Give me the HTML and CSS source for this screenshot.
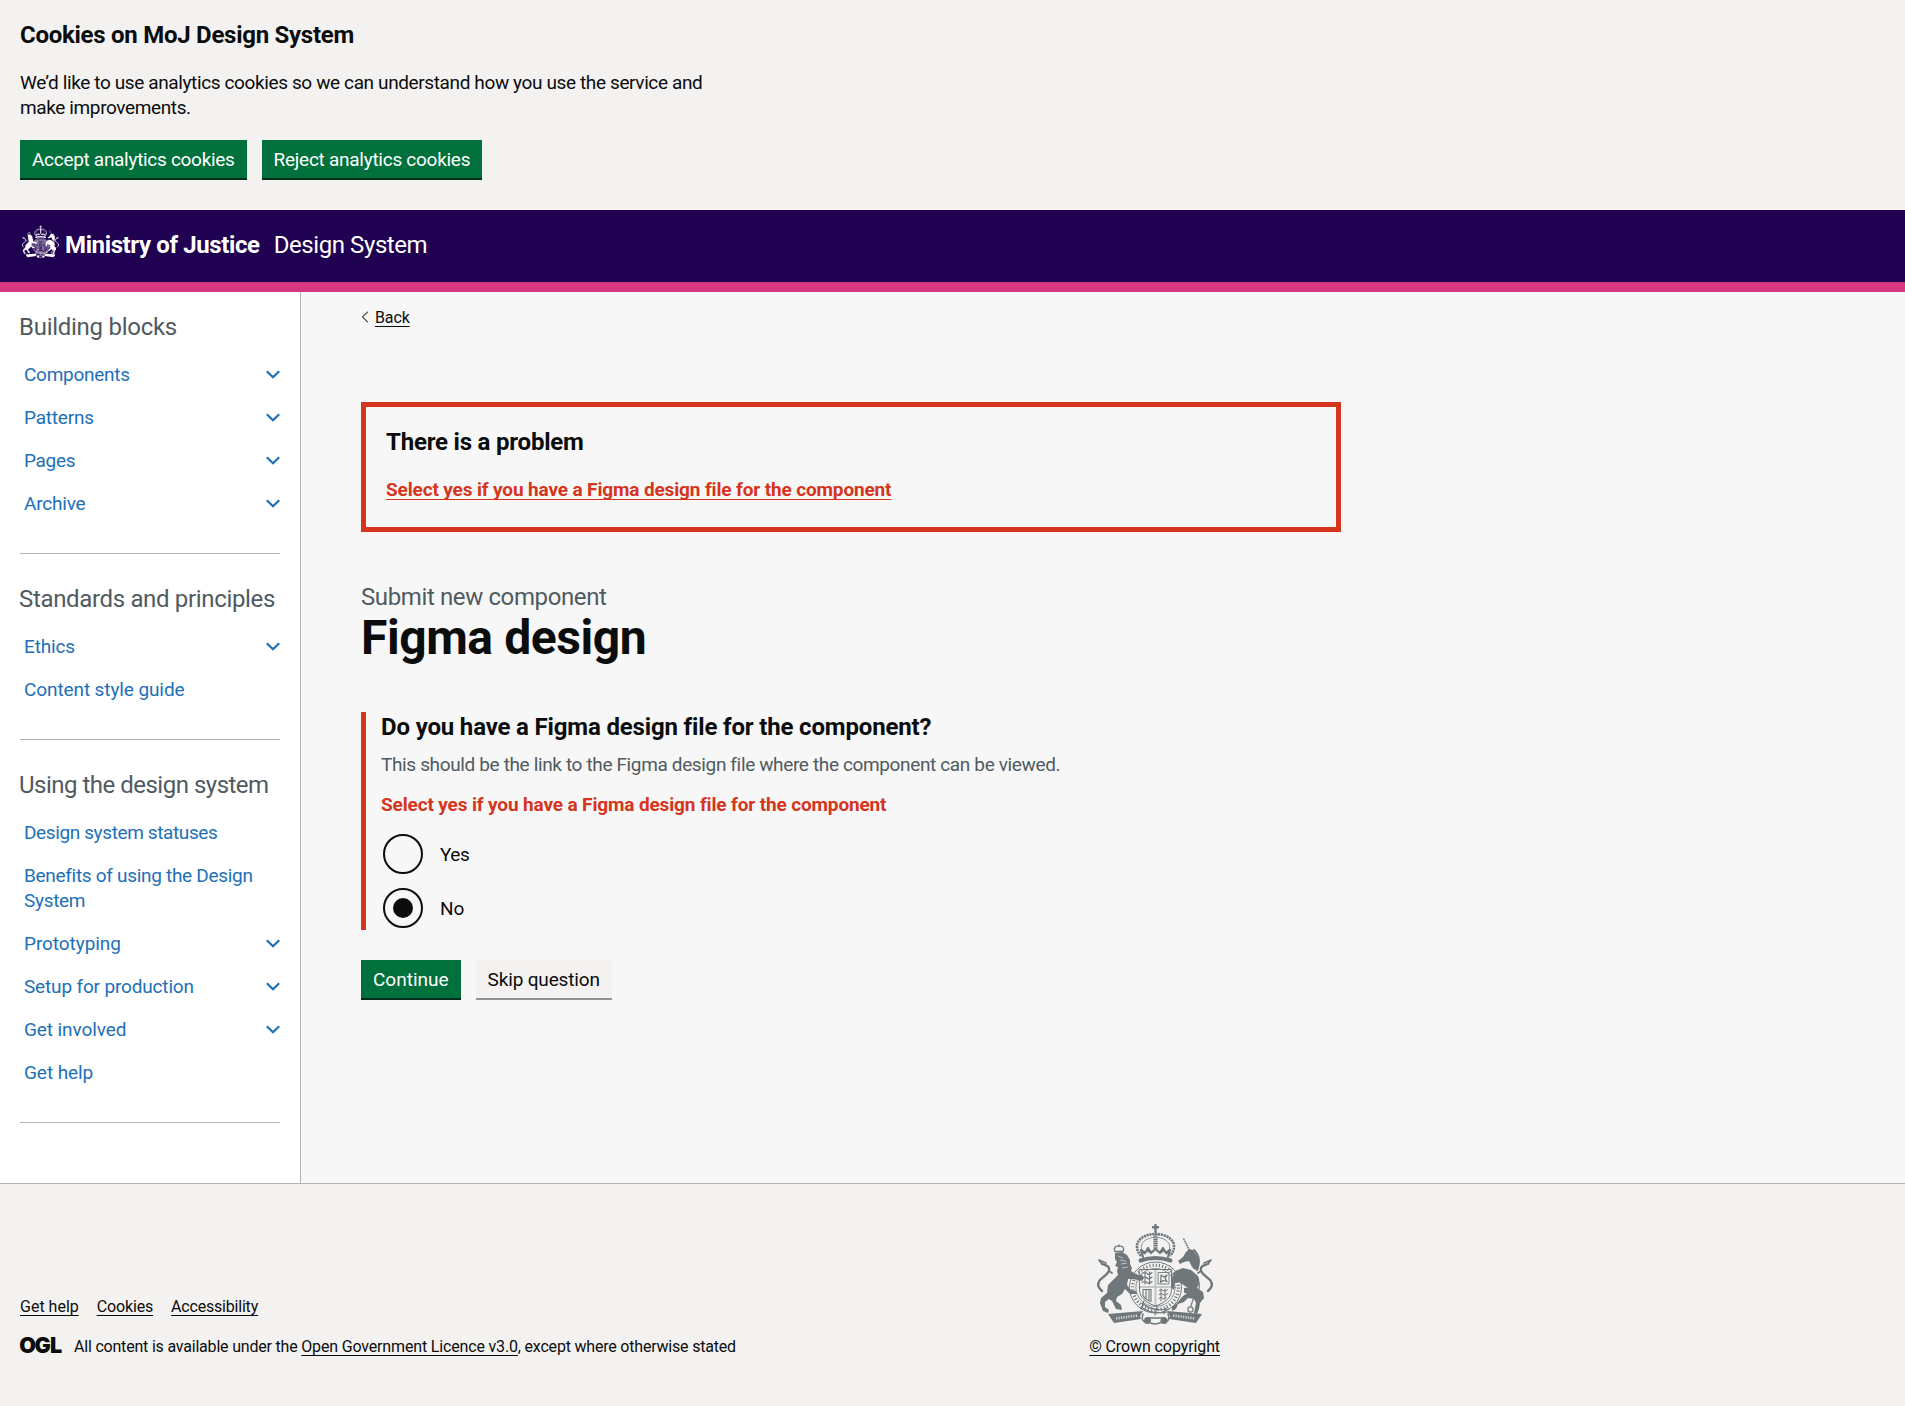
FILE: index.html
```html
<!DOCTYPE html>
<html lang="en">
<head>
<meta charset="utf-8">
<title>Figma design - MoJ Design System</title>
<link rel="stylesheet" href="styles.css">
</head>
<body>
<svg class="sprite" aria-hidden="true">
  <symbol id="crest" viewBox="0 0 116 102">
    <g fill="none" stroke="currentColor" stroke-linecap="round" stroke-linejoin="round">
      <!-- crown -->
      <path d="M58.500 1v7M56 3.200h5" stroke-width="2.400"/>
      <path d="M44 32C34 20 44 10 58.500 10S83 20 73 32" stroke-width="2.600" stroke-dasharray="2.200 .7" stroke-linecap="butt"/>
      <path d="M47 30C40 21 47 14 57 13.500M70 30C77 21 70 14 60 13.500" stroke-width=".8"/>
      <path d="M58.500 10v15" stroke-width="4.200" stroke-dasharray="1.600 .6" stroke-linecap="butt"/>
      <path d="M43.500 36.500Q58.500 31.500 73.500 36.500" stroke-width="4"/>
      <path d="M46 33l-2-7 4 3 3-5 3 5 4.500-4 4.500 4 3-5 3 5 4-3-2 7" stroke-width="2.200"/>
      <!-- garter -->
      <ellipse cx="58.500" cy="63.500" rx="26" ry="25.500" stroke-width="1"/>
      <ellipse cx="58.500" cy="63.500" rx="22.800" ry="22.200" stroke-width="3.400" stroke-dasharray="1.100 2.100" stroke-linecap="butt"/>
      <ellipse cx="58.500" cy="63.500" rx="19.600" ry="19" stroke-width=".8"/>
      <!-- shield -->
      <path d="M42.500 45.500h32v20c0 8-6 13-16 16.500-10-3.500-16-8.500-16-16.500z" stroke-width="1"/>
      <path d="M58.500 45.500v36M42.500 63h32" stroke-width="2.200" opacity=".35"/>
      <path d="M45 49.500q3-2 5 0t5-1M45 54q3-2 5 0t5-1M45 58.500q3-2 5 0t5-1M48 48v12M52.500 48v12" stroke-width="1.100"/>
      <path d="M61.500 48.500h10.500v11.500h-10.500z" stroke-width=".9"/>
      <path d="M64 51l3 2 3-2-2 3.500 2 3-4-1-2.500 2 .5-4z" stroke-width="1.200"/>
      <path d="M46 65.500v6q2 4 8 6v-12zM49 66v9M52 66v11" stroke-width="1.100"/>
      <path d="M62 66.500q2-2 4 0t5-1M62 70.500q2-2 4 0t5-1M62 74.500q2-2 4 0t3-1M64 65v12M68 65v9" stroke-width="1"/>
      <!-- buckle and strap -->
      <path d="M45 79q10 9 27 6M44 83q11 8 27 5M47 77l-3 8M60 83l-2 8M69 84l-2 6" stroke-width="1.100"/>
      <!-- lion tail and crown -->
      <path d="M5 67C0 63 0 58 4 55c5-4 9-7 8-11-1-3-5-3-7-4" stroke-width="2.300"/>
      <path d="M5 40l-3-4 7 3M12 47l3 2M2 59l-2 2" stroke-width="1.700"/>
      <path d="M18 27.500c-2-4 1-6 4-5 3-1 6 1 4 5zM22 22.500v-1.500" stroke-width="1.300"/>
      <!-- unicorn horn, tail, mane and chain -->
      <path d="M86.500 14.500l6 12" stroke-width="1.500" stroke-dasharray="1.800 .5" stroke-linecap="butt"/>
      <path d="M111 67c5-4 5-9 1-12-5-4-9-7-8-11 1-3 5-3 7-4" stroke-width="2.300"/>
      <path d="M111 40l3-4-7 3M104 47l-3 2M114 59l2 2" stroke-width="1.700"/>
      <path d="M97 26q8 8 3 20M94 31q7 5 3 13" stroke-width="2" stroke-dasharray="1.800 .8"/>
      <path d="M101 54q3 10-1 15t-6 13" stroke-width="1.300" stroke-dasharray="1.600 1"/>
      <circle cx="93.500" cy="85.500" r="2.600" stroke-width="1.200"/>
      <!-- base -->
      <path d="M46 90q-3 9 6 8 5 4 13 0 9 1 6-8M50 94h16" stroke-width="1.500"/>
    </g>
    <g fill="currentColor">
      <!-- lion -->
      <path d="M18 29l7-1 5 3 3 5 0 4 2 4-1 3 6 4 5 0 2 3-2 3-4-1-6-1-4 0-1 6 4 5 5 1 1 3-7 0-5-5-3 5-5 3-1 4 5 4 1 5-6-1-4-8-3-2-4 3 0 5 4 3-1 3-5-2-3-8 1-5 6-5 1-8 5-5 5-5-1-4 1-4-3-1 2-4-2-3z"/>
      <!-- unicorn -->
      <path d="M92 25l4 1 5 7 1 8-2 6-5-4-3-6-5 1-4 2-2-3 5-4 3-5z"/>
      <path d="M78 47l8-3 8 2 7 6 1 8-2 4 6 4 1 6-4 5-1 6-2 5-3-1 2-10-2-4-6-1-4 4-6 2-2 5-4 2 0-4 5-4 5-6 5-4 4-4-6-3-6-4-4 1-1 7-3-3 0-8z"/>
      <path d="M87 64l7-1 4 3-5 3-6 0z"/>
      <circle cx="50.500" cy="96.500" r="3.500"/><circle cx="67" cy="96.500" r="3.500"/>
      <circle cx="52" cy="27" r="1.800"/><circle cx="65" cy="27" r="1.800"/>
      <!-- motto ribbon -->
      <path d="M11 90l35-3-3 5 1 3-27 4z"/>
      <path d="M105 90l-35-3 3 5-1 3 27 4z"/>
    </g>
    <g fill="none" stroke="#f3f2f1" stroke-width="2.600" stroke-dasharray="1.300 1.200" opacity=".75">
      <path d="M19 94.500l22-3M76 91.500l22 3"/>
    </g>
    <path d="M21 32l5 2M23 36l6 1M24 40l6-1M25 44l6-1" fill="none" stroke="#f3f2f1" stroke-width=".8" opacity=".7"/>
  </symbol>
  <symbol id="chevron" viewBox="0 0 14 9">
    <path d="M.8 1.200l6.200 6 6.200-6" fill="none" stroke="currentColor" stroke-width="2.200"/>
  </symbol>
</svg>

<section class="cookies">
  <h2 class="heading-m ls-27">Cookies on MoJ Design System</h2>
  <p class="cookies-text ls-38">We’d like to use analytics cookies so we can understand how you use the service and<br>make improvements.</p>
  <div class="button-group">
    <button class="button ls-30">Accept analytics cookies</button>
    <button class="button ls-27">Reject analytics cookies</button>
  </div>
</section>

<header class="header">
  <svg class="header-crest"><use href="#crest"/></svg>
  <a class="header-org ls-38">Ministry of Justice</a>
  <a class="header-service ls-42">Design System</a>
</header>

<div class="layout">
  <nav class="sidebar">
    <section class="nav-group">
      <h2 class="nav-title ls-27">Building blocks</h2>
      <a class="nav-item ls-27">Components<svg class="chevron"><use href="#chevron"/></svg></a>
      <a class="nav-item ls-20">Patterns<svg class="chevron"><use href="#chevron"/></svg></a>
      <a class="nav-item ls-32">Pages<svg class="chevron"><use href="#chevron"/></svg></a>
      <a class="nav-item ls-20">Archive<svg class="chevron"><use href="#chevron"/></svg></a>
    </section>
    <section class="nav-group">
      <h2 class="nav-title ls-34">Standards and principles</h2>
      <a class="nav-item ls-16">Ethics<svg class="chevron"><use href="#chevron"/></svg></a>
      <a class="nav-item ls-10">Content style guide</a>
    </section>
    <section class="nav-group">
      <h2 class="nav-title ls-50">Using the design system</h2>
      <a class="nav-item ls-38">Design system statuses</a>
      <a class="nav-item ls-30">Benefits of using the Design System</a>
      <a class="nav-item ls-07">Prototyping<svg class="chevron"><use href="#chevron"/></svg></a>
      <a class="nav-item ls-16">Setup for production<svg class="chevron"><use href="#chevron"/></svg></a>
      <a class="nav-item ls-10">Get involved<svg class="chevron"><use href="#chevron"/></svg></a>
      <a class="nav-item ls-07">Get help</a>
    </section>
  </nav>

  <main class="main">
    <a class="back ls-14"><svg class="back-arrow" viewBox="0 0 8 12"><path d="M6.800 .8L1.500 6l5.300 5.200" fill="none" stroke="currentColor" stroke-width="1.200"/></svg><span class="link">Back</span></a>

    <div class="error-summary">
      <h2 class="heading-m ls-20">There is a problem</h2>
      <a class="error-link ls-14">Select yes if you have a Figma design file for the component</a>
    </div>

    <span class="caption ls-38">Submit new component</span>
    <h1 class="heading-xl ls-42">Figma design</h1>

    <div class="form-group">
      <h2 class="heading-m legend ls-16">Do you have a Figma design file for the component?</h2>
      <div class="hint ls-36">This should be the link to the Figma design file where the component can be viewed.</div>
      <p class="error-message ls-14">Select yes if you have a Figma design file for the component</p>
      <div class="radios">
        <label class="radio ls-50"><span class="radio-dot"></span>Yes</label>
        <label class="radio ls-07"><span class="radio-dot checked"></span>No</label>
      </div>
    </div>

    <div class="button-group">
      <button class="button">Continue</button>
      <button class="button secondary ls-16">Skip question</button>
    </div>
  </main>
</div>

<footer class="footer">
  <div class="footer-inner">
    <div class="footer-meta">
      <div class="footer-links">
        <a class="link">Get help</a>
        <a class="link ls-16">Cookies</a>
        <a class="link ls-20">Accessibility</a>
      </div>
      <div class="licence">
        <svg class="ogl" viewBox="0 0 41 17"><text class="ogl-text" y="15.800"><tspan x="-.8">O</tspan><tspan x="14.400">G</tspan><tspan x="30">L</tspan></text></svg>
        <span class="ls-20">All content is available under the <a class="link ls-16">Open Government Licence v3.0</a>, except where otherwise stated</span>
      </div>
    </div>
    <div class="copyright">
      <svg class="footer-crest"><use href="#crest"/></svg>
      <a class="link ls-10">© Crown copyright</a>
    </div>
  </div>
</footer>
</body>
</html>
```
FILE: styles.css
```css
* { box-sizing: border-box; }

body {
  margin: 0;
  font-family: Roboto, Arial, sans-serif;
  font-size: 19px;
  line-height: 25px;
  color: #0b0c0c;
  background: #f3f2f1;
}

h1, h2, p { margin: 0; }
.sprite { display: none; }

/* Tracking steps, in hundredths of a pixel */
.ls-07 { letter-spacing: -.07px; }
.ls-10 { letter-spacing: -.1px; }
.ls-14 { letter-spacing: -.14px; }
.ls-16 { letter-spacing: -.16px; }
.ls-20 { letter-spacing: -.2px; }
.ls-27 { letter-spacing: -.27px; }
.ls-30 { letter-spacing: -.3px; }
.ls-32 { letter-spacing: -.32px; }
.ls-34 { letter-spacing: -.34px; }
.ls-36 { letter-spacing: -.36px; }
.ls-38 { letter-spacing: -.38px; }
.ls-42 { letter-spacing: -.42px; }
.ls-50 { letter-spacing: -.5px; }

.heading-m { font-size: 24px; line-height: 30px; font-weight: 700; }
.heading-xl { padding-top: 1px; font-size: 48px; line-height: 50px; font-weight: 700; margin-bottom: 49px; }
.caption { display: block; font-size: 24px; line-height: 30px; color: #505a5f; }

.link {
  text-decoration: underline;
  text-decoration-thickness: 1px;
  text-underline-offset: 2.500px;
  text-decoration-skip-ink: none;
}

.button-group { display: flex; gap: 15px; }
.button {
  margin: 0;
  padding: 8px 10px 7px;
  border: 2px solid transparent;
  background: #00703c;
  box-shadow: 0 2px 0 #002d18;
  color: #fff;
  font-family: inherit;
  font-size: 19px;
  line-height: 19px;
}
.secondary { background: #f3f2f1; color: #0b0c0c; box-shadow: 0 2px 0 #929191; }

/* Cookie banner */
.cookies { height: 210px; padding: 20px; background: #f3f2f1; }
.cookies-text { margin: 20px 0; }

/* Header */
.header {
  display: flex;
  align-items: flex-start;
  height: 82px;
  padding: 15px 22px 0;
  background: #200050;
  border-bottom: 10px solid #d53880;
  color: #fff;
  font-size: 24px;
  line-height: 30px;
}
.header-crest { width: 37px; height: 34px; }
.header-org { margin: 5px 14px 0 6px; font-weight: 700; }
.header-service { margin-top: 5px; }

/* Page columns */
.layout { display: flex; height: 891px; }
.sidebar {
  width: 301px;
  padding: 20px 20px 0;
  background: #fff;
  border-right: 1px solid #b1b4b6;
}
.nav-group { padding-bottom: 28px; margin-bottom: 30px; border-bottom: 1px solid #b1b4b6; }
.nav-title { margin: 0 0 11px -1px; font-size: 24px; line-height: 30px; font-weight: 400; color: #505a5f; white-space: nowrap; }
.nav-item {
  display: flex;
  justify-content: space-between;
  padding: 9px 0 9px 4px;
  color: #1d70b8;
}
.chevron { width: 14px; height: 9px; margin-top: 8px; }

.main { flex: 1; padding: 16px 0 0 60px; background: #f7f7f7; }
.back { display: flex; align-items: flex-start; font-size: 16px; line-height: 20px; height: 94px; }
.back-arrow { width: 8px; height: 12px; margin: 3px 6px 0 0; color: #505a5f; }

.error-summary { width: 980px; margin-bottom: 50px; padding: 20px 20px 25px; border: 5px solid #d4351c; }
.error-link {
  display: block;
  margin-top: 20px;
  font-weight: 700;
  color: #d4351c;
  text-decoration: underline 1px;
  text-underline-offset: 3px;
  text-decoration-skip-ink: none;
}

.form-group { width: 980px; margin-bottom: 30px; padding-left: 15px; border-left: 5px solid #d4351c; }
.legend { margin-bottom: 10px; }
.hint { margin-bottom: 15px; color: #505a5f; }
.error-message { margin-bottom: 15px; font-weight: 700; color: #d4351c; }
.radios { display: grid; gap: 10px; }
.radio { display: flex; align-items: center; gap: 17px; height: 44px; padding-left: 2px; }
.radio-dot {
  display: grid;
  place-items: center;
  width: 40px;
  height: 40px;
  border: 2px solid #0b0c0c;
  border-radius: 50%;
}
.checked::after { content: ""; width: 20px; height: 20px; border-radius: 50%; background: #0b0c0c; }

/* Footer */
.footer { height: 223px; padding: 40px 20px 0; border-top: 1px solid #b1b4b6; background: #f3f2f1; font-size: 16px; line-height: 20px; }
.footer-inner { display: flex; justify-content: space-between; align-items: flex-end; width: 1200px; height: 133px; }
.footer-links { display: flex; gap: 18px; margin-bottom: 20px; }
.licence { display: flex; align-items: flex-start; gap: 13px; }
.ogl { width: 41px; height: 17px; overflow: visible; }
.ogl-text { font-family: Inter, sans-serif; font-weight: 900; font-size: 21.500px; fill: #0b0c0c; }
.copyright { display: flex; flex-direction: column; align-items: center; gap: 11px; }
.footer-crest { width: 116px; height: 102px; color: #6f777b; }
```
